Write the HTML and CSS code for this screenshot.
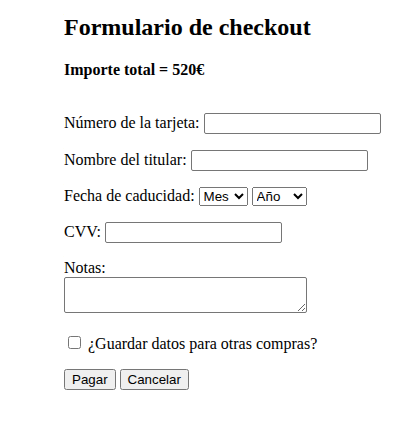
FILE: index.html
```html
<!DOCTYPE html>
<html lang="es">
<head>
  <meta charset="UTF-8" />
  <meta name="viewport" content="width=device-width, initial-scale=1.0"/>
  <title>Checkout</title>
  <link rel="stylesheet" href="styles.css">
</head>
<body>
  <section class="checkout">
    <h1>Formulario de checkout</h1>
    <p class="total"><strong>Importe total = 520€</strong></p>

    <form class="pay-form">
      <p class="row">
        <label for="card">Número de la tarjeta:</label>
        <input type="text" id="card" class="field" />
      </p>
      <p class="row">
        <label for="owner">Nombre del titular:</label>
        <input type="text" id="owner" class="field" />
      </p>
      <p class="row">
        <label>Fecha de caducidad:</label>
        <select class="pick month">
          <option>Mes</option>
        </select>
        <select class="pick year">
          <option>Año</option>
        </select>
      </p>
      <p class="row">
        <label for="cvv">CVV:</label>
        <input type="text" id="cvv" class="field" />
      </p>
      <p class="row">
        <label for="notes">Notas:</label><br>
        <textarea id="notes" class="notes"></textarea>
      </p>
      <p class="row">
        <input type="checkbox" id="save" class="check" />
        <label for="save">¿Guardar datos para otras compras?</label>
      </p>
      <p class="row">
        <button type="submit" class="btn">Pagar</button>
        <button type="button" class="btn">Cancelar</button>
      </p>
    </form>
  </section>
</body>
</html>
```

FILE: styles.css
```css
body {
  margin: 8px;
  font-family: 'Liberation Serif', 'Times New Roman', serif;
  font-size: 16px;
  color: #000;
  background: #fff;
}
/* contenedor */
.checkout {
  padding-left: 56px;
}
.checkout h1 {
  font-size: 24px;
  margin: 6px 0 20px;
}
.total {
  margin: 0 0 34px;
}
.row {
  margin: 0 0 16px;
}
.field {
  font-family: 'Liberation Sans', Arial, sans-serif;
  font-size: 13.33px;
  width: 177px;
  height: 21px;
  box-sizing: border-box;
  border: 1px solid #767676;
  border-radius: 2px;
  padding: 1px 2px;
}
.pick {
  font-family: 'Liberation Sans', Arial, sans-serif;
  font-size: 13.33px;
  height: 19px;
  box-sizing: border-box;
}
.month {
  width: 49px;
}
.year {
  width: 55px;
}
.notes {
  font-family: 'Liberation Mono', monospace;
  font-size: 13.33px;
  width: 243px;
  height: 36px;
  box-sizing: border-box;
  border: 1px solid #767676;
  border-radius: 2px;
  margin: 0;
}
.check {
  margin: 3px 3px 3px 4px;
}
.btn {
  font-family: 'Liberation Sans', Arial, sans-serif;
  font-size: 13.33px;
  padding: 1px 6px;
}
```
